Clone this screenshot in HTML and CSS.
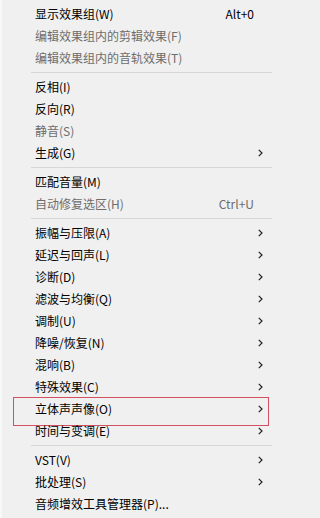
FILE: index.html
```html
<!DOCTYPE html>
<html lang="zh-CN">
<head>
<meta charset="utf-8">
<link rel="stylesheet" href="styles.css">
</head>
<body>
<div class="menu">
  <div class="row"><span class="label">显示效果组(W)</span><span class="key">Alt+0</span><span class="sub"></span></div>
  <div class="row disabled"><span class="label">编辑效果组内的剪辑效果(F)</span><span class="sub"></span></div>
  <div class="row disabled"><span class="label">编辑效果组内的音轨效果(T)</span><span class="sub"></span></div>
  <div class="sep"></div>
  <div class="row"><span class="label">反相(I)</span><span class="sub"></span></div>
  <div class="row"><span class="label">反向(R)</span><span class="sub"></span></div>
  <div class="row disabled"><span class="label">静音(S)</span><span class="sub"></span></div>
  <div class="row"><span class="label">生成(G)</span><span class="sub"><svg class="chev" viewBox="0 0 5 8"><path d="M0.8 0.8 L4 4 L0.8 7.2"/></svg></span></div>
  <div class="sep"></div>
  <div class="row"><span class="label">匹配音量(M)</span><span class="sub"></span></div>
  <div class="row disabled"><span class="label">自动修复选区(H)</span><span class="key">Ctrl+U</span><span class="sub"></span></div>
  <div class="sep"></div>
  <div class="row"><span class="label">振幅与压限(A)</span><span class="sub"><svg class="chev" viewBox="0 0 5 8"><path d="M0.8 0.8 L4 4 L0.8 7.2"/></svg></span></div>
  <div class="row"><span class="label">延迟与回声(L)</span><span class="sub"><svg class="chev" viewBox="0 0 5 8"><path d="M0.8 0.8 L4 4 L0.8 7.2"/></svg></span></div>
  <div class="row"><span class="label">诊断(D)</span><span class="sub"><svg class="chev" viewBox="0 0 5 8"><path d="M0.8 0.8 L4 4 L0.8 7.2"/></svg></span></div>
  <div class="row"><span class="label">滤波与均衡(Q)</span><span class="sub"><svg class="chev" viewBox="0 0 5 8"><path d="M0.8 0.8 L4 4 L0.8 7.2"/></svg></span></div>
  <div class="row"><span class="label">调制(U)</span><span class="sub"><svg class="chev" viewBox="0 0 5 8"><path d="M0.8 0.8 L4 4 L0.8 7.2"/></svg></span></div>
  <div class="row"><span class="label">降噪/恢复(N)</span><span class="sub"><svg class="chev" viewBox="0 0 5 8"><path d="M0.8 0.8 L4 4 L0.8 7.2"/></svg></span></div>
  <div class="row"><span class="label">混响(B)</span><span class="sub"><svg class="chev" viewBox="0 0 5 8"><path d="M0.8 0.8 L4 4 L0.8 7.2"/></svg></span></div>
  <div class="row"><span class="label">特殊效果(C)</span><span class="sub"><svg class="chev" viewBox="0 0 5 8"><path d="M0.8 0.8 L4 4 L0.8 7.2"/></svg></span></div>
  <div class="row marked"><span class="label">立体声声像(O)</span><span class="sub"><svg class="chev" viewBox="0 0 5 8"><path d="M0.8 0.8 L4 4 L0.8 7.2"/></svg></span></div>
  <div class="row"><span class="label">时间与变调(E)</span><span class="sub"><svg class="chev" viewBox="0 0 5 8"><path d="M0.8 0.8 L4 4 L0.8 7.2"/></svg></span></div>
  <div class="sep"></div>
  <div class="row"><span class="label">VST(V)</span><span class="sub"><svg class="chev" viewBox="0 0 5 8"><path d="M0.8 0.8 L4 4 L0.8 7.2"/></svg></span></div>
  <div class="row"><span class="label">批处理(S)</span><span class="sub"><svg class="chev" viewBox="0 0 5 8"><path d="M0.8 0.8 L4 4 L0.8 7.2"/></svg></span></div>
  <div class="row"><span class="label">音频增效工具管理器(P)...</span><span class="sub"></span></div>
</div>
</body>
</html>
```

FILE: styles.css
```css
html, body {
  margin: 0;
  padding: 0;
  background: #f0f0f0;
}

.menu {
  width: 275px;
  height: 518px;
  box-sizing: border-box;
  padding: 3px 0 3px 0;
  border-left: 2px solid #f8f8f8;
  background: #f0f0f0;
  font-family: "Noto Sans CJK SC", "Noto Sans", sans-serif;
  font-size: 12px;
  color: #000;
  overflow: hidden;
}

.row {
  position: relative;
  display: flex;
  align-items: center;
  height: 22px;
  line-height: 22px;
  padding-left: 33px;
}

.row.disabled {
  color: #6d6d6d;
}

.label {
  flex: 1;
  white-space: nowrap;
}

.key {
  white-space: nowrap;
}

.sub {
  width: 21px;
  flex: none;
  display: flex;
  align-items: center;
  padding-left: 4px;
  box-sizing: border-box;
}

.chev {
  width: 5px;
  height: 8px;
  fill: none;
  stroke: #202020;
  stroke-width: 1.2;
}

.sep {
  height: 0;
  margin: 3px 3px 3px 29px;
  border-top: 1px solid #d7d7d7;
}

.marked::after {
  content: "";
  position: absolute;
  left: 11px;
  top: -1px;
  width: 254px;
  height: 27px;
  border: 1px solid #d2505f;
}
```
